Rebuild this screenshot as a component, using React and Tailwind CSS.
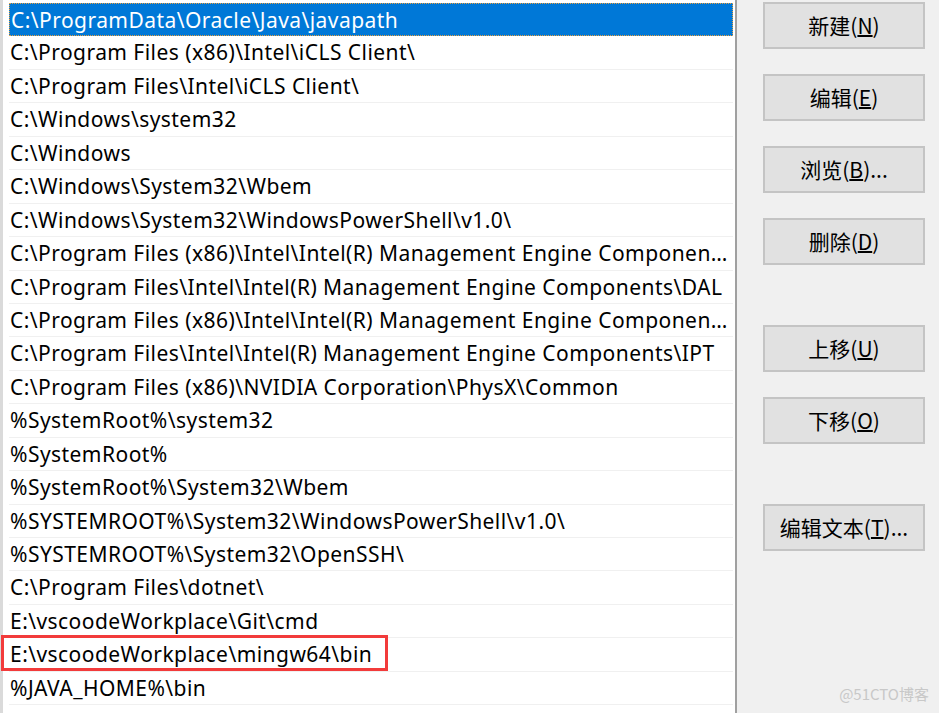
import React from "react";

const paths = [
  "C:\\ProgramData\\Oracle\\Java\\javapath",
  "C:\\Program Files (x86)\\Intel\\iCLS Client\\",
  "C:\\Program Files\\Intel\\iCLS Client\\",
  "C:\\Windows\\system32",
  "C:\\Windows",
  "C:\\Windows\\System32\\Wbem",
  "C:\\Windows\\System32\\WindowsPowerShell\\v1.0\\",
  "C:\\Program Files (x86)\\Intel\\Intel(R) Management Engine Components\\DAL",
  "C:\\Program Files\\Intel\\Intel(R) Management Engine Components\\DAL",
  "C:\\Program Files (x86)\\Intel\\Intel(R) Management Engine Components\\IPT",
  "C:\\Program Files\\Intel\\Intel(R) Management Engine Components\\IPT",
  "C:\\Program Files (x86)\\NVIDIA Corporation\\PhysX\\Common",
  "%SystemRoot%\\system32",
  "%SystemRoot%",
  "%SystemRoot%\\System32\\Wbem",
  "%SYSTEMROOT%\\System32\\WindowsPowerShell\\v1.0\\",
  "%SYSTEMROOT%\\System32\\OpenSSH\\",
  "C:\\Program Files\\dotnet\\",
  "E:\\vscoodeWorkplace\\Git\\cmd",
  "E:\\vscoodeWorkplace\\mingw64\\bin",
  "%JAVA_HOME%\\bin",
];

const buttons = [
  { label: "新建", key: "N", extra: "", gap: false },
  { label: "编辑", key: "E", extra: "", gap: false },
  { label: "浏览", key: "B", extra: "...", gap: false },
  { label: "删除", key: "D", extra: "", gap: false },
  { label: "上移", key: "U", extra: "", gap: true },
  { label: "下移", key: "O", extra: "", gap: false },
  { label: "编辑文本", key: "T", extra: "...", gap: true },
];

function PathRow({ text, index }) {
  const selected = index === 0;
  const marked = index === 19;
  return (
    <div
      className={`relative h-[33.45px] w-[724px] ${
        selected
          ? "bg-[#0078d7] text-white border border-dotted border-[#e8a040]"
          : "border-b border-[#f0f0f0] text-black"
      }`}
    >
      <div className="truncate pl-[1px] pr-[5px] leading-[32px] tracking-[0.45px]">{text}</div>
      {marked && (
        <div className="absolute -left-[8px] -top-[3px] h-[36px] w-[387px] border-[3px] border-[#f23b3b]" />
      )}
    </div>
  );
}

export default function App() {
  return (
    <div
      className="relative flex h-[713px] w-[939px] overflow-hidden bg-[#f0f0f0] text-[21px]"
      style={{ fontFamily: '"Noto Sans", "Noto Sans CJK SC", sans-serif' }}
    >
      <div className="h-full w-[737px] shrink-0 border-l-[3px] border-r-[2px] border-l-[#dadada] border-r-[#a0a0a0] bg-white pl-[6px] pt-[3px]">
        {paths.map((p, i) => (
          <PathRow key={i} text={p} index={i} />
        ))}
      </div>
      <div className="flex flex-col gap-[25px] pl-[26px] pt-[2px]">
        {buttons.map((b) => (
          <button
            key={b.label}
            className={`flex h-[47px] w-[162px] items-center justify-center border-2 border-[#c4c4c4] bg-[#e1e1e1] text-[21px] text-black ${
              b.gap ? "mt-[35px]" : ""
            }`}
            style={{ fontFamily: '"Noto Sans CJK SC", "Noto Sans", sans-serif' }}
          >
            {b.label}(<span className="underline underline-offset-1">{b.key}</span>){b.extra}
          </button>
        ))}
      </div>
      <div
        className="absolute bottom-[8px] right-[10px] text-[15px] text-[#c8c8c8]"
        style={{ fontFamily: '"Noto Sans CJK SC", sans-serif' }}
      >
        @51CTO博客
      </div>
    </div>
  );
}
